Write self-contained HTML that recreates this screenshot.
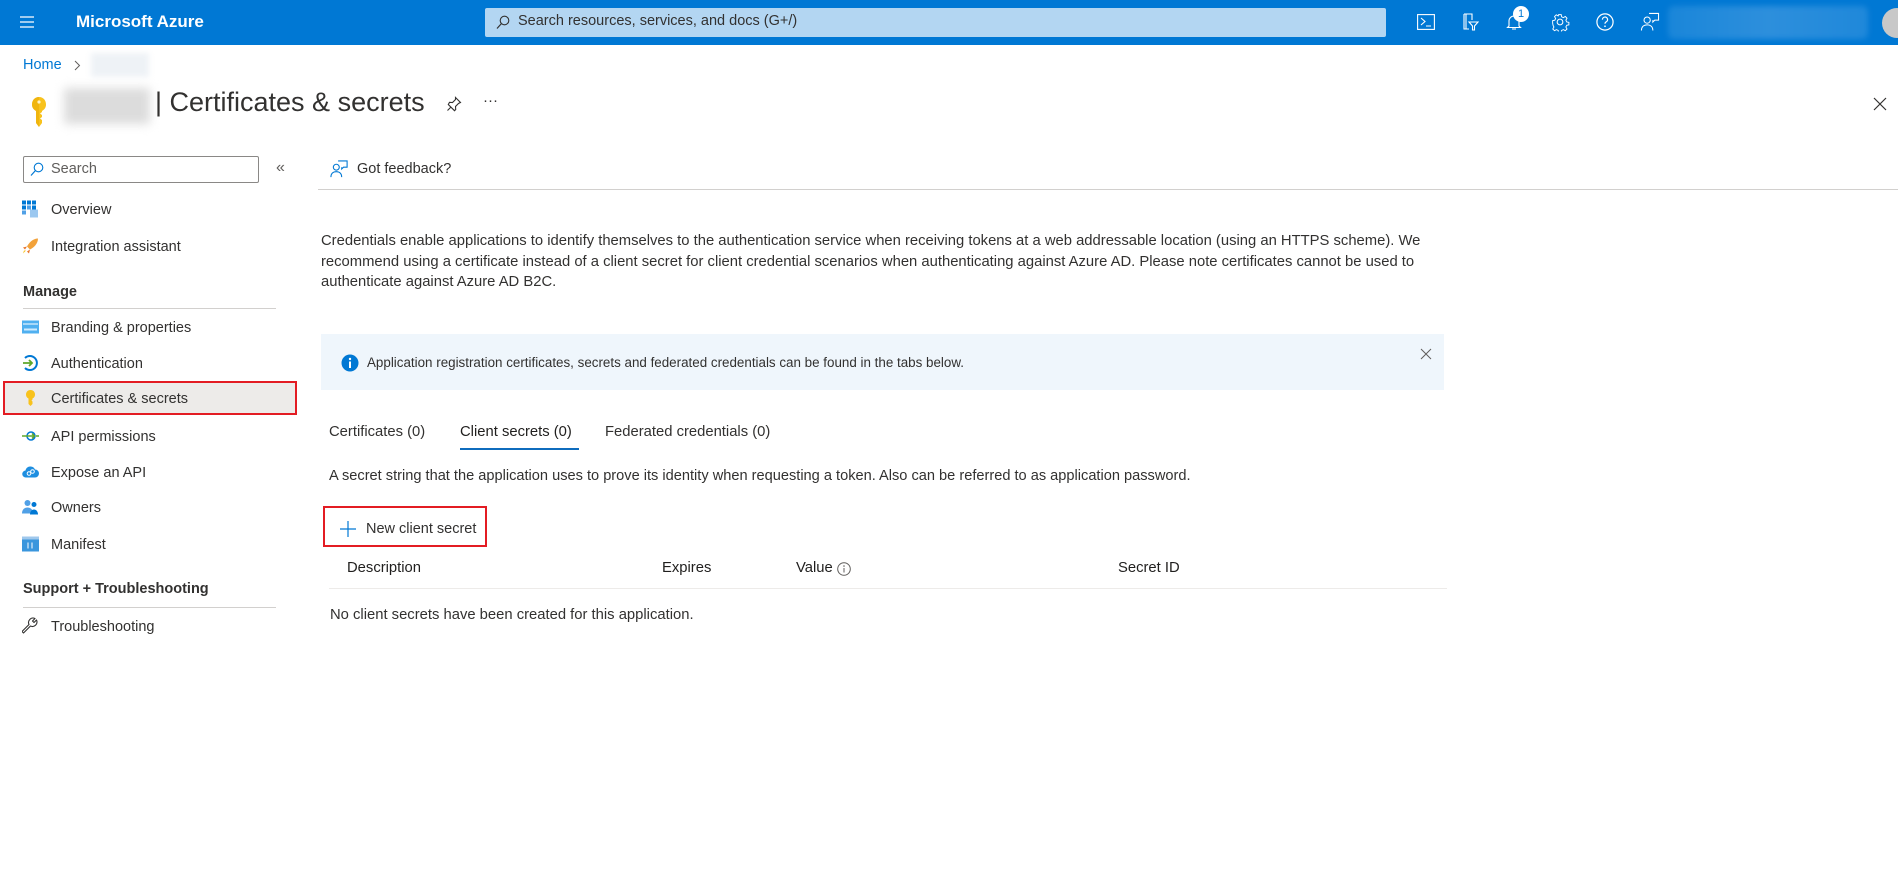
<!DOCTYPE html>
<html><head><meta charset="utf-8">
<style>
*{margin:0;padding:0;box-sizing:border-box}
body{width:1898px;height:870px;overflow:hidden;background:#fff;font-family:"Liberation Sans",sans-serif;color:#323130;position:relative;font-size:14px}
.a{position:absolute;white-space:nowrap}
.top{position:absolute;left:0;top:0;width:1898px;height:45px;background:#0078d4}
.nav{position:absolute;left:51px;font-size:14.5px;color:#323130;transform:translateY(-50%)}
.ic{position:absolute;left:22px;width:17px;height:17px;transform:translateY(-50%)}
.hd{position:absolute;left:23px;font-size:14.5px;font-weight:bold;color:#323130;transform:translateY(-50%)}
.ti{position:absolute;transform:translate(-50%,-50%)}
</style></head><body>
<div class="top"></div>
<svg class="ti" style="left:27px;top:22px" width="16" height="14" viewBox="0 0 16 14"><path d="M1 2h14M1 7h14M1 12h14" stroke="#fff" stroke-width="1.3"/></svg>
<div class="a" style="left:76px;top:12px;color:#fff;font-weight:bold;font-size:17px">Microsoft Azure</div>
<div class="a" style="left:485px;top:8px;width:901px;height:29px;background:#b3d6f2;border-radius:2px"></div>
<svg class="a" style="left:496px;top:15px" width="14" height="15" viewBox="0 0 14 15"><circle cx="8.5" cy="5.5" r="4.3" fill="none" stroke="#323130" stroke-width="1.1"/><path d="M5.5 8.5L1 13.5" stroke="#323130" stroke-width="1.2"/></svg>
<div class="a" style="left:518px;top:13px;font-size:14.5px;color:#323130">Search resources, services, and docs (G+/)</div>
<svg class="ti" style="left:1426px;top:22px" width="18" height="16" viewBox="0 0 18 16"><rect x="0.6" y="0.6" width="16.8" height="14.8" fill="none" stroke="#fff" stroke-width="1.1"/><path d="M4 4l4 3.5L4 11M9 12h5" stroke="#fff" stroke-width="1.1" fill="none"/></svg>
<svg class="ti" style="left:1470px;top:22px" width="18" height="18" viewBox="0 0 18 18"><path d="M3 1h8v6M3 1v15h5M5 1v15M8 9h9l-3.5 4v4h-2v-4z" stroke="#fff" stroke-width="1.1" fill="none"/></svg>
<svg class="ti" style="left:1514px;top:22px" width="18" height="18" viewBox="0 0 18 18"><path d="M4 13V8a5 5 0 0 1 10 0v5l1.5 1.5h-13zM7 16h4" stroke="#fff" stroke-width="1.1" fill="none"/></svg>
<div class="a" style="left:1513px;top:6px;width:16px;height:16px;border-radius:50%;background:#fff;color:#0078d4;font-size:11px;text-align:center;line-height:16px">1</div>
<svg class="ti" style="left:1560px;top:22px" width="19" height="19" viewBox="0 0 20 20"><circle cx="10" cy="10" r="3" fill="none" stroke="#fff" stroke-width="1.1"/><path d="M8.5 1.5h3l.5 2.5 2 1 2.3-1.3 2 2-1.3 2.3 1 2 2.5.5v3l-2.5.5-1 2 1.3 2.3-2 2-2.3-1.3-2 1-.5 2.5h-3l-.5-2.5-2-1-2.3 1.3-2-2 1.3-2.3-1-2L1.5 11.5v-3l2.5-.5 1-2L3.7 3.7l2-2L8 3z" transform="scale(.9) translate(1 1)" fill="none" stroke="#fff" stroke-width="1.1"/></svg>
<svg class="ti" style="left:1605px;top:22px" width="19" height="19" viewBox="0 0 20 20"><circle cx="10" cy="10" r="8.5" fill="none" stroke="#fff" stroke-width="1.3"/><path d="M7.3 7.5a2.7 2.7 0 1 1 3.7 2.5c-.8.4-1 .9-1 1.8" fill="none" stroke="#fff" stroke-width="1.3"/><circle cx="10" cy="14.5" r=".9" fill="#fff"/></svg>
<svg class="ti" style="left:1650px;top:22px" width="19" height="19" viewBox="0 0 20 20"><circle cx="7" cy="8" r="3.3" fill="none" stroke="#fff" stroke-width="1.1"/><path d="M1 19c0-4 2.5-6 6-6s6 2 6 6M9 1h10v7h-4l-2 2V8" fill="none" stroke="#fff" stroke-width="1.1"/></svg>
<div class="a" style="left:1668px;top:6px;width:200px;height:33px;background:linear-gradient(90deg,#1a86d9,#2d8fdc,#1f88da);filter:blur(3px);border-radius:6px"></div>
<div class="a" style="left:1882px;top:8px;width:30px;height:30px;border-radius:50%;background:#c8c8c8"></div>

<div class="a" style="left:23px;top:57px;color:#0078d4;font-size:14.5px">Home</div>
<svg class="a" style="left:74px;top:60px" width="7" height="11" viewBox="0 0 7 11"><path d="M1 1l4.5 4.5L1 10" fill="none" stroke="#605e5c" stroke-width="1"/></svg>
<div class="a" style="left:91px;top:53px;width:58px;height:24px;background:#eef2f6;filter:blur(3px)"></div>
<svg class="a" style="left:30px;top:96px" width="18" height="32" viewBox="0 0 18 32"><path d="M9 1C4.5 1 2 4.5 2 8.5c0 3 1.5 5 4 6.5V27l3 4 3-4v-3l-2-1.5 2-1.5v-2l-2-1.5 2-1.5V15c2.5-1.5 4-3.5 4-6.5C16 4.5 13.5 1 9 1z" fill="#f8c21c"/><path d="M9 1C4.5 1 2 4.5 2 8.5c0 3 1.5 5 4 6.5V27l3 4z" fill="#e8a800" opacity=".5"/><circle cx="9" cy="6" r="1.6" fill="#fff3c4"/></svg>
<div class="a" style="left:64px;top:88px;width:86px;height:36px;background:#dcdcdc;filter:blur(5px)"></div>
<div class="a" style="left:155px;top:87px;font-size:27px;color:#323130">| Certificates &amp; secrets</div>
<svg class="ti" style="left:454px;top:104px" width="16" height="16" viewBox="0 0 16 16"><path d="M9.5 1.5l5 5-2 1-3 3 .2 3-1.2 1.2-6.2-6.2L3.5 6.3l3 .2 3-3zM5 11l-3.5 3.5" fill="none" stroke="#323130" stroke-width="1.1"/></svg>
<div class="a" style="left:483px;top:92px;font-size:15px;color:#323130">···</div>
<svg class="ti" style="left:1880px;top:104px" width="14" height="14" viewBox="0 0 14 14"><path d="M1 1l12 12M13 1L1 13" stroke="#323130" stroke-width="1.2"/></svg>

<div class="a" style="left:23px;top:156px;width:236px;height:27px;border:1px solid #8a8886;border-radius:2px"></div>
<svg class="a" style="left:30px;top:162px" width="14" height="15" viewBox="0 0 14 15"><circle cx="8.5" cy="5.5" r="4.3" fill="none" stroke="#0078d4" stroke-width="1.1"/><path d="M5.5 8.5L1 13.5" stroke="#0078d4" stroke-width="1.2"/></svg>
<div class="a" style="left:51px;top:161px;font-size:14.5px;color:#605e5c">Search</div>
<div class="a" style="left:276px;top:159px;font-size:16px;color:#605e5c">«</div>

<svg class="ic" style="top:209px" viewBox="0 0 17 17"><rect x="0" y="0" width="4" height="4" fill="#0078d4"/><rect x="5" y="0" width="4" height="4" fill="#0078d4"/><rect x="10" y="0" width="4" height="4" fill="#0078d4"/><rect x="0" y="5" width="4" height="4" fill="#0078d4"/><rect x="5" y="5" width="4" height="4" fill="#50a0e6"/><rect x="10" y="5" width="4" height="4" fill="#0078d4"/><rect x="0" y="10" width="4" height="4" fill="#50a0e6"/><rect x="8" y="9" width="8" height="8" fill="#9cc8f0"/></svg>
<div class="nav" style="top:210px">Overview</div>
<svg class="ic" style="top:246px" viewBox="0 0 17 17"><path d="M16 1c-5 0-9 4-11 8l3 3c4-2 8-6 8-11z" fill="#f2a23a"/><path d="M5 9l-4 1 2 2zM8 12l-1 4-2-2z" fill="#e8742a"/><path d="M4 13l-3 3 1-3z" fill="#f8c21c"/></svg>
<div class="nav" style="top:247px">Integration assistant</div>
<div class="hd" style="top:292px">Manage</div>
<div class="a" style="left:23px;top:308px;width:253px;height:1px;background:#d2d0ce"></div>
<svg class="ic" style="top:327px" viewBox="0 0 17 17"><rect x="0" y="2" width="17" height="13" fill="#50b0f0"/><rect x="1" y="5" width="15" height="1" fill="#fff"/><rect x="2" y="10" width="13" height="2" fill="#d0ecff"/></svg>
<div class="nav" style="top:328px">Branding &amp; properties</div>
<svg class="ic" style="top:363px" viewBox="0 0 17 17"><path d="M3 3.5A7 7 0 1 1 3 13.5" fill="none" stroke="#0078d4" stroke-width="2"/><path d="M1 8.5h9M7 5.5l3 3-3 3" fill="none" stroke="#5ea82b" stroke-width="1.8"/></svg>
<div class="nav" style="top:364px">Authentication</div>
<div class="a" style="left:3px;top:381px;width:294px;height:34px;background:#edebe9;border:2px solid #e31c23"></div>
<svg class="ic" style="top:398px" viewBox="0 0 17 17"><path d="M8.5 0.5C5.5 0.5 4 2.8 4 5c0 2 1 3.2 2.5 4v5.5l2 2 2-2V12l-1-1 1-1V9c1.5-.8 2.5-2 2.5-4 0-2.2-1.5-4.5-4.5-4.5z" fill="#f8c21c"/></svg>
<div class="nav" style="top:399px">Certificates &amp; secrets</div>
<svg class="ic" style="top:436px" viewBox="0 0 17 17"><circle cx="9" cy="8.5" r="4" fill="none" stroke="#0078d4" stroke-width="1.5"/><path d="M0 8.5h13M10 6l2.5 2.5L10 11M14 8.5h3" fill="none" stroke="#5ea82b" stroke-width="1.5"/></svg>
<div class="nav" style="top:437px">API permissions</div>
<svg class="ic" style="top:472px" viewBox="0 0 17 17"><path d="M4 14a3.5 3.5 0 0 1-.5-7 5 5 0 0 1 9.5-1 4 4 0 0 1 0 8z" fill="#1e8ee0"/><circle cx="7" cy="10" r="1.8" fill="none" stroke="#fff" stroke-width="1"/><circle cx="10.5" cy="8" r="1.8" fill="none" stroke="#fff" stroke-width="1"/></svg>
<div class="nav" style="top:473px">Expose an API</div>
<svg class="ic" style="top:507px" viewBox="0 0 17 17"><circle cx="5.5" cy="4.5" r="3" fill="#50a0e6"/><path d="M0 15c0-4 2.5-6 5.5-6S11 11 11 15z" fill="#50a0e6"/><circle cx="12" cy="6" r="2.5" fill="#0078d4"/><path d="M8 16c0-3 1.8-5 4-5s4 2 4 5z" fill="#0078d4"/></svg>
<div class="nav" style="top:508px">Owners</div>
<svg class="ic" style="top:544px" viewBox="0 0 17 17"><rect x="0" y="1" width="17" height="15" fill="#3a96dd"/><rect x="0" y="1" width="17" height="3" fill="#a0c8ec"/><path d="M6 7v6M10 7v6" stroke="#fff" stroke-width="1"/></svg>
<div class="nav" style="top:545px">Manifest</div>
<div class="hd" style="top:589px">Support + Troubleshooting</div>
<div class="a" style="left:23px;top:607px;width:253px;height:1px;background:#d2d0ce"></div>
<svg class="ic" style="top:626px" viewBox="0 0 17 17"><path d="M1.5 15.5l7-7a4.5 4.5 0 0 0 6-6L12 5 10.5 3.5 13 1a4.5 4.5 0 0 0-6 6l-7 7z" fill="none" stroke="#323130" stroke-width="1.1" stroke-linejoin="round"/></svg>
<div class="nav" style="top:627px">Troubleshooting</div>

<svg class="ti" style="left:339px;top:169px" width="18" height="18" viewBox="0 0 20 20"><circle cx="7" cy="8" r="3.3" fill="none" stroke="#0078d4" stroke-width="1.2"/><path d="M1 19c0-4 2.5-6 6-6s6 2 6 6M9 1h10v7h-4l-2 2V8" fill="none" stroke="#0078d4" stroke-width="1.2"/></svg>
<div class="a" style="left:357px;top:161px;font-size:14.5px">Got feedback?</div>
<div class="a" style="left:318px;top:189px;width:1580px;height:1px;background:#d2d0ce"></div>

<div class="a" style="left:321px;top:231px;font-size:14.8px;line-height:20.5px;color:#323130">Credentials enable applications to identify themselves to the authentication service when receiving tokens at a web addressable location (using an HTTPS scheme). We<br>recommend using a certificate instead of a client secret for client credential scenarios when authenticating against Azure AD. Please note certificates cannot be used to<br>authenticate against Azure AD B2C.</div>

<div class="a" style="left:321px;top:334px;width:1123px;height:56px;background:#eff6fc"></div>
<svg class="ti" style="left:350px;top:363px" width="18" height="18" viewBox="0 0 18 18"><circle cx="9" cy="9" r="8.5" fill="#0078d4"/><rect x="8" y="7.5" width="2" height="6.5" fill="#fff"/><circle cx="9" cy="5" r="1.2" fill="#fff"/></svg>
<div class="a" style="left:367px;top:355px;font-size:13.4px">Application registration certificates, secrets and federated credentials can be found in the tabs below.</div>
<svg class="ti" style="left:1426px;top:354px" width="11" height="11" viewBox="0 0 11 11"><path d="M.5.5l10 10M10.5.5l-10 10" stroke="#605e5c" stroke-width="1"/></svg>

<div class="a" style="left:329px;top:424px;font-size:14.8px;color:#323130">Certificates (0)</div>
<div class="a" style="left:460px;top:424px;font-size:14.8px;color:#201f1e">Client secrets (0)</div>
<div class="a" style="left:605px;top:424px;font-size:14.8px;color:#323130">Federated credentials (0)</div>
<div class="a" style="left:460px;top:448px;width:119px;height:2px;background:#0f6cbd"></div>

<div class="a" style="left:329px;top:468px;font-size:14.6px">A secret string that the application uses to prove its identity when requesting a token. Also can be referred to as application password.</div>

<div class="a" style="left:323px;top:506px;width:164px;height:41px;border:2px solid #e31c23"></div>
<svg class="ti" style="left:348px;top:529px" width="16" height="16" viewBox="0 0 16 16"><path d="M8 0v16M0 8h16" stroke="#0078d4" stroke-width="1.2"/></svg>
<div class="a" style="left:366px;top:521px;font-size:14.5px">New client secret</div>

<div class="a" style="left:347px;top:560px;font-size:14.8px;color:#201f1e">Description</div>
<div class="a" style="left:662px;top:560px;font-size:14.8px;color:#201f1e">Expires</div>
<div class="a" style="left:796px;top:560px;font-size:14.8px;color:#201f1e">Value</div>
<svg class="a" style="left:837px;top:562px" width="14" height="14" viewBox="0 0 14 14"><circle cx="7" cy="7" r="6.3" fill="none" stroke="#605e5c" stroke-width="1"/><path d="M7 6v4.5" stroke="#605e5c"/><circle cx="7" cy="4" r=".8" fill="#605e5c"/></svg>
<div class="a" style="left:1118px;top:560px;font-size:14.8px;color:#201f1e">Secret ID</div>
<div class="a" style="left:329px;top:588px;width:1118px;height:1px;background:#edebe9"></div>
<div class="a" style="left:330px;top:607px;font-size:14.8px">No client secrets have been created for this application.</div>
</body></html>
